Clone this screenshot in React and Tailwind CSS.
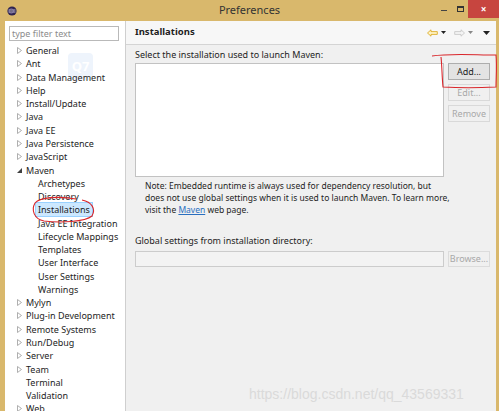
import React from "react";

const TREE = [
  { label: "General", arrow: "closed" },
  { label: "Ant", arrow: "closed" },
  { label: "Data Management", arrow: "closed" },
  { label: "Help", arrow: "closed" },
  { label: "Install/Update", arrow: "closed" },
  { label: "Java", arrow: "closed" },
  { label: "Java EE", arrow: "closed" },
  { label: "Java Persistence", arrow: "closed" },
  { label: "JavaScript", arrow: "closed" },
  { label: "Maven", arrow: "open" },
  { label: "Archetypes", child: true },
  { label: "Discovery", child: true },
  { label: "Installations", child: true, selected: true },
  { label: "Java EE Integration", child: true },
  { label: "Lifecycle Mappings", child: true },
  { label: "Templates", child: true },
  { label: "User Interface", child: true },
  { label: "User Settings", child: true },
  { label: "Warnings", child: true },
  { label: "Mylyn", arrow: "closed" },
  { label: "Plug-in Development", arrow: "closed" },
  { label: "Remote Systems", arrow: "closed" },
  { label: "Run/Debug", arrow: "closed" },
  { label: "Server", arrow: "closed" },
  { label: "Team", arrow: "closed" },
  { label: "Terminal" },
  { label: "Validation" },
  { label: "Web", arrow: "closed" },
];

const Arrow = ({ type }) => {
  if (type === "closed")
    return (
      <svg width="5" height="7" viewBox="0 0 5 7" className="shrink-0">
        <path d="M0.5 0.5 L4.5 3.5 L0.5 6.5 Z" fill="none" stroke="#a6a6a6" strokeWidth="0.9" />
      </svg>
    );
  if (type === "open")
    return (
      <svg width="5" height="5" viewBox="0 0 5 5" className="shrink-0">
        <path d="M5 0 L5 5 L0 5 Z" fill="#404040" />
      </svg>
    );
  return <span className="w-[5px] shrink-0" />;
};

const TreeRow = ({ item }) => (
  <div className={`flex items-center h-[13.27px] ${item.child ? "pl-[31px]" : "pl-[12px]"}`}>
    {!item.child && <Arrow type={item.arrow} />}
    <span
      className={`${item.child ? "px-[2px]" : "ml-[3px] px-[1px]"} leading-[13px] whitespace-nowrap ${
        item.selected ? "bg-[#cce8ff] outline outline-1 outline-[#99d1ff]" : ""
      }`}
    >
      {item.label}
    </span>
  </div>
);

const Btn = ({ children, disabled }) => (
  <div
    className={`h-[17px] w-[42px] flex items-center justify-center border ${
      disabled ? "border-[#d9d9d9] bg-[#f0f0f0] text-[#a8a8a8]" : "border-[#adadad] bg-[#e3e3e3] text-[#222]"
    }`}
  >
    {children}
  </div>
);

export default function App() {
  return (
    <div
      className="relative w-[499px] h-[411px] overflow-hidden bg-[#d9b86c] text-[9px] text-[#1e1e1e] flex flex-col"
      style={{ fontFamily: '"Noto Sans", "Open Sans", sans-serif' }}
    >
      {/* title bar */}
      <div className="h-[21px] flex items-center shrink-0 relative">
        <svg width="10" height="10" viewBox="0 0 10 10" className="ml-[7px]">
          <circle cx="5" cy="5" r="4.6" fill="#2f2450" />
          <path d="M1.5 4 H8.5 M1.5 6 H8.5" stroke="#ddd" strokeWidth="0.8" />
          <circle cx="4.3" cy="5" r="2.2" fill="none" stroke="#9b8bc2" strokeWidth="0.6" />
        </svg>
        <div className="absolute left-0 right-0 top-0 h-[21px] flex items-center justify-center text-[11px] text-[#333]">
          Preferences
        </div>
        <div className="ml-auto flex items-start h-full">
          <div className="w-[16px] flex justify-center pt-[10px]">
            <div className="w-[6px] h-[1px] bg-[#444]" />
          </div>
          <div className="w-[16px] flex justify-center pt-[6px]">
            <div className="w-[7px] h-[6px] border border-[#333] border-t-2" />
          </div>
          <div className="w-[31px] h-[18px] bg-[#c7453f] flex items-center justify-center text-white text-[10px] font-bold">
            ×
          </div>
        </div>
      </div>

      {/* body */}
      <div className="flex flex-1 pl-[5px] pr-[3px] min-h-0">
        {/* left tree */}
        <div className="w-[121px] bg-white border-r border-[#cfcfcf] shrink-0 relative">
          {/* faint logo watermark */}
          <div className="absolute left-[63px] top-[32px] w-[25px] h-[27px] rounded-[4px] bg-[#eef4fc] flex items-center justify-center text-white text-[13px] font-bold">
            Q7
          </div>
          <div className="relative mt-[5px] ml-[4px] w-[110px] h-[15px] border border-[#b9b9b9] flex items-center px-[2px] text-[#8c8c8c]">
            type filter text
          </div>
          <div className="relative mt-[3px]">
            {TREE.map((it) => (
              <TreeRow key={it.label} item={it} />
            ))}
          </div>
        </div>

        {/* right panel */}
        <div className="flex-1 bg-[#f0f0f0] flex flex-col">
          <div className="h-[24px] bg-[#f7f7f7] border-b border-[#d4d4d4] flex items-center pl-[9px] pr-[6px]">
            <span className="font-bold text-[9.5px]">Installations</span>
            <div className="ml-auto flex items-center gap-[3px]">
              <svg width="11" height="8" viewBox="0 0 11 8">
                <path d="M0.5 4 L4 0.8 V2.6 H10.3 V5.4 H4 V7.2 Z" fill="#fff3c4" stroke="#d9a514" strokeWidth="0.8" />
              </svg>
              <svg width="5" height="3" viewBox="0 0 5 3" className="mr-[5px]">
                <path d="M0 0 H5 L2.5 3 Z" fill="#222" />
              </svg>
              <svg width="11" height="8" viewBox="0 0 11 8">
                <path d="M10.5 4 L7 0.8 V2.6 H0.7 V5.4 H7 V7.2 Z" fill="#f4f4f4" stroke="#c4c4c4" strokeWidth="0.8" />
              </svg>
              <svg width="5" height="3" viewBox="0 0 5 3" className="mr-[7px]">
                <path d="M0 0 H5 L2.5 3 Z" fill="#888" />
              </svg>
              <svg width="7" height="4" viewBox="0 0 7 4">
                <path d="M0 0 H7 L3.5 4 Z" fill="#222" />
              </svg>
            </div>
          </div>

          <div className="pl-[9px] pr-[6px] flex flex-col">
            <div className="mt-[3px] h-[14px] leading-[14px]">Select the installation used to launch Maven:</div>
            <div className="flex mt-[1px]">
              <div className="flex-1 h-[114px] bg-white border border-[#c2c2c2]" />
              <div className="ml-[4px] flex flex-col gap-[4px]">
                <Btn>Add...</Btn>
                <Btn disabled>Edit...</Btn>
                <Btn disabled>Remove</Btn>
              </div>
            </div>
            <div className="mt-[3px] pl-[10px] leading-[12px] text-[8.5px] whitespace-nowrap">
              Note: Embedded runtime is always used for dependency resolution, but
              <br />
              does not use global settings when it is used to launch Maven. To learn more,
              <br />
              visit the <span className="text-[#2a6fbf] underline">Maven</span> web page.
            </div>
            <div className="mt-[19px] leading-[12px]">Global settings from installation directory:</div>
            <div className="flex mt-[4px]">
              <div className="flex-1 h-[16px] bg-[#f3f3f3] border border-[#cccccc]" />
              <div className="ml-[4px] w-[42px] h-[16px] border border-[#dcdcdc] flex items-center justify-center text-[#a8a8a8]">
                Browse...
              </div>
            </div>
          </div>
        </div>
      </div>

      {/* red hand-drawn annotations */}
      <svg className="absolute left-0 top-0 pointer-events-none" width="499" height="411" viewBox="0 0 499 411">
        <path
          d="M432 56 C450 53 475 55 496 55 C497 66 496 78 496 87 C478 88 458 88 443 87 C442 77 442 66 441 57"
          fill="none"
          stroke="#d9262b"
          strokeWidth="1.1"
        />
        <path
          d="M76 199 C60 196 40 197 35 203 C31 210 34 219 44 221 C60 223 85 222 92 216 C96 209 92 202 82 200"
          fill="none"
          stroke="#d9262b"
          strokeWidth="1.1"
        />
      </svg>

      {/* watermark */}
      <div
        className="absolute left-[249px] top-[384px] text-[14px] text-[#dadada] whitespace-nowrap"
        style={{ fontFamily: '"Liberation Sans", Arial, sans-serif' }}
      >
        https://blog.csdn.net/qq_43569331
      </div>
    </div>
  );
}
